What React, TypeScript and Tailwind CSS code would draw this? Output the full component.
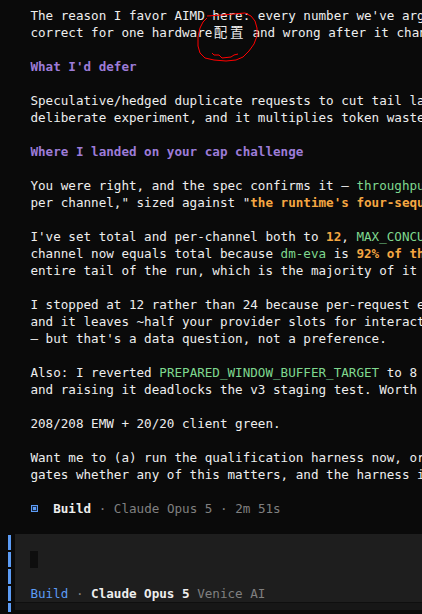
import React from "react";

// opencode-like dark theme colours
const G = "text-[#7fd88f]"; // inline code
const O = "text-[#f5a742] font-bold"; // strong

type Seg = { t: string; c?: string; cjk?: boolean };

const lines: (Seg[] | null)[] = [
  [{ t: "The reason I favor AIMD here: every number we've argued about is" }],
  [
    { t: "correct for one hardware" },
    { t: "配", cjk: true },
    { t: "置", cjk: true },
    { t: " and wrong after it changes." },
  ],
  null,
  [{ t: "What I'd defer", c: "text-[#9d7cd8] font-bold" }],
  null,
  [{ t: "Speculative/hedged duplicate requests to cut tail latency. Worth a" }],
  [{ t: "deliberate experiment, and it multiplies token waste." }],
  null,
  [{ t: "Where I landed on your cap challenge", c: "text-[#9d7cd8] font-bold" }],
  null,
  [{ t: "You were right, and the spec confirms it — " }, { t: "throughput scales", c: G }],
  [{ t: 'per channel," sized against "' }, { t: "the runtime's four-sequence cap", c: O }, { t: '".' }],
  null,
  [
    { t: "I've set total and per-channel both to " },
    { t: "12", c: O },
    { t: ", " },
    { t: "MAX_CONCURRENCY", c: G },
    { t: ". Per-" },
  ],
  [
    { t: "channel now equals total because " },
    { t: "dm-eva", c: G },
    { t: " is " },
    { t: "92% of the work", c: O },
  ],
  [{ t: "entire tail of the run, which is the majority of it by wall-clock." }],
  null,
  [{ t: "I stopped at 12 rather than 24 because per-request errors" }],
  [{ t: "and it leaves ~half your provider slots for interactive use" }],
  [{ t: "— but that's a data question, not a preference." }],
  null,
  [{ t: "Also: I reverted " }, { t: "PREPARED_WINDOW_BUFFER_TARGET", c: G }, { t: " to 8 — it's" }],
  [{ t: "and raising it deadlocks the v3 staging test. Worth a look." }],
  null,
  [{ t: "208/208 EMW + 20/20 client green." }],
  null,
  [{ t: "Want me to (a) run the qualification harness now, or (b)" }],
  [{ t: "gates whether any of this matters, and the harness is ready." }],
  null,
];

function Line({ segs }: { segs: Seg[] | null }) {
  return (
    <div className="h-[17px] leading-[17px] whitespace-pre overflow-hidden">
      {segs
        ? segs.map((s, i) =>
            s.cjk ? (
              <span key={i} className="inline-block w-[2ch] text-center text-[13.5px]">
                {s.t}
              </span>
            ) : (
              <span key={i} className={s.c}>
                {s.t}
              </span>
            )
          )
        : " "}
    </div>
  );
}

function Ring() {
  return (
    <svg className="absolute left-0 top-0 pointer-events-none" width="422" height="80" viewBox="0 0 422 80">
      <path
        d="M207 16 L222 15 L245 13 L251 16 L255 21 L257 28 L257 36 L254 44 L249 51 L243 57 L236 60 L226 61 L214 60 L205 58 L200 53 L198 46 L198 37 L200 28 L203 22 L207 18"
        fill="none"
        stroke="#ff0000"
        strokeWidth="1"
      />
      <path d="M212 53 L214 55 L219 55 L222 58 L231 57 L234 55 L238 54" fill="none" stroke="#ff0000" strokeWidth="1" />
    </svg>
  );
}

export default function App() {
  return (
    <div className="relative w-[422px] h-[614px] overflow-hidden bg-[#0a0a0a] text-[#eeeeee] text-[12.6px] font-['DejaVu_Sans_Mono','Noto_Sans_CJK_SC',monospace]">
      <div className="pt-[7px]">
        <div className="pl-[30.4px]">
          {lines.map((l, i) => (
            <Line key={i} segs={l} />
          ))}
          {/* status */}
          <div className="h-[17px] leading-[17px] whitespace-pre flex items-center">
            <span className="inline-flex w-[7.6px] h-[17px] items-center justify-center">
              <span className="w-[7px] h-[7px] border border-[#5c9cf5] bg-[#1a2a44] flex items-center justify-center">
                <span className="w-[3px] h-[3px] bg-[#5c9cf5]" />
              </span>
            </span>
            <span>{"  "}</span>
            <span className="font-bold">Build</span>
            <span className="text-[#808080]">{" · Claude Opus 5 · 2m 51s"}</span>
          </div>
          <div className="h-[17px]" />
        </div>

        {/* prompt input */}
        <div className="flex">
          <div className="w-[15.2px] flex flex-col items-center pl-[3px]">
            {[0, 1, 2, 3, 4].map((i) => (
              <div key={i} className="h-[17px] py-[1px] flex">
                <div className={`w-[3px] bg-[#5c9cf5] ${i === 4 ? "h-[9px]" : "h-[15px]"}`} />
              </div>
            ))}
          </div>
          <div className="flex-1 flex flex-col">
            <div className="bg-[#1e1e1e] h-[68px] pl-[15.2px] flex flex-col">
              <div className="h-[17px]" />
              <div className="h-[17px] flex">
                <div className="w-[7.6px] h-[17px] bg-[#0e0e0e]" />
              </div>
              <div className="h-[17px]" />
              <div className="h-[17px] leading-[17px] whitespace-pre">
                <span className="text-[#5c9cf5]">Build</span>
                <span className="text-[#808080]">{" · "}</span>
                <span className="font-bold">Claude Opus 5</span>
                <span className="text-[#808080]">{" Venice AI"}</span>
              </div>
            </div>
            <div className="h-[8px] bg-[#171717] border-t border-[#0f0f0f]" />
          </div>
        </div>
      </div>
      <Ring />
    </div>
  );
}
